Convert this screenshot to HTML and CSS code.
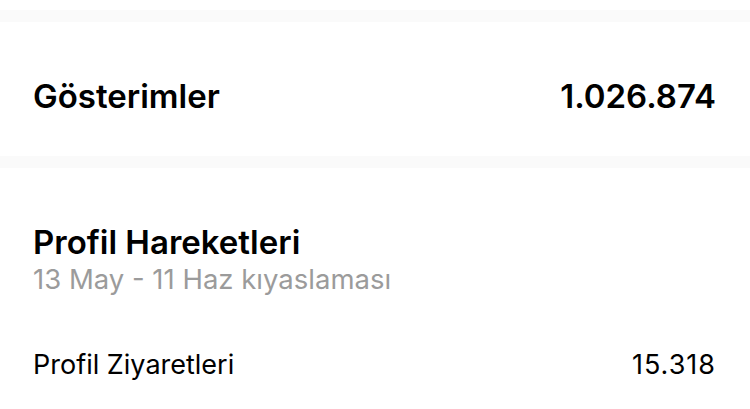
FILE: index.html
```html
<!DOCTYPE html>
<html lang="tr">

<head>
    <meta charset="UTF-8">
    <meta name="viewport" content="width=device-width, initial-scale=1.0">
    <title>İstatistikler</title>
    <link rel="stylesheet" href="styles.css">
</head>

<body>
    <div class="divider"></div>

    <div class="section overview">
        <div class="stat-row">
            <span class="stat-label">Gösterimler</span>
            <span class="stat-value">1.026.874</span>
        </div>
    </div>

    <div class="divider"></div>

    <div class="section activity">
        <h2 class="section-title">Profil Hareketleri</h2>
        <p class="section-sub">13 May - 11 Haz kıyaslaması</p>

        <div class="item-row">
            <span>Profil Ziyaretleri</span>
            <span class="item-value">15.318</span>
        </div>
    </div>
</body>

</html>
```

FILE: styles.css
```css
* {
    margin: 0;
    padding: 0;
    box-sizing: border-box;
}

body {
    background-color: #fff;
    font-family: Inter, "Liberation Sans", Arial, sans-serif;
    color: #000;
    padding-top: 10px;
}

.divider {
    height: 12px;
    background-color: #fafafa;
}

.section {
    padding: 0 34px 0 33px;
}

.overview {
    padding-top: 54px;
    padding-bottom: 40px;
}

.stat-row {
    display: flex;
    justify-content: space-between;
    align-items: center;
    font-size: 33px;
    line-height: 40px;
    font-weight: 600;
}

.activity {
    padding-top: 54px;
}

.section-title {
    font-size: 33px;
    font-weight: 600;
    line-height: 40px;
}

.section-sub {
    font-size: 27.5px;
    line-height: 34px;
    color: #9b9b9b;
}

.item-row {
    display: flex;
    justify-content: space-between;
    font-size: 27px;
    line-height: 34px;
    margin-top: 52px;
}

.item-value {
    letter-spacing: 1px;
}
```
